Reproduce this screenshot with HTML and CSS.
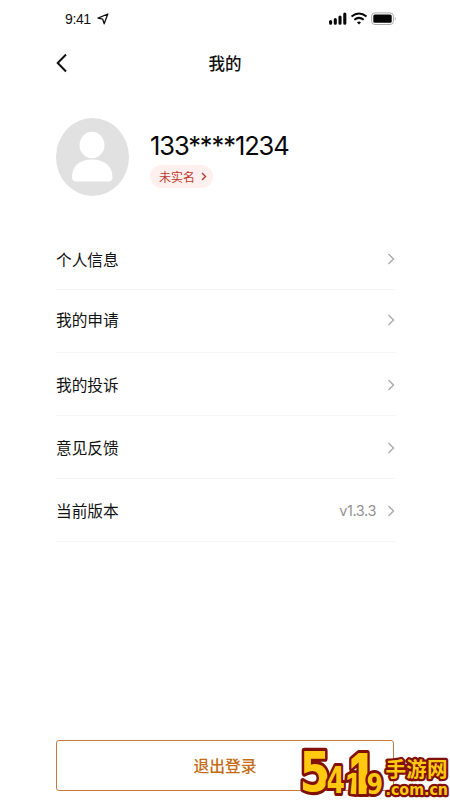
FILE: index.html
```html
<!DOCTYPE html>
<html lang="zh-CN">
<head>
<meta charset="utf-8">
<title>我的</title>
<link rel="stylesheet" href="styles.css">
</head>
<body>
<div class="screen">
  <div class="status">
    <span class="time">9:41</span>
    <svg class="location" viewBox="0 0 12 12"><path d="M1 5.2 10.8 1 7.2 10.8 5.7 6.2Z"/></svg>
    <svg class="signals" viewBox="0 0 68 14">
      <path d="M1.6 9.5v1.8M6.3 7.5v3.8M11 5v6.3M15.8 2v9.3" stroke="#080808" stroke-width="3.1" stroke-linecap="round"/>
      <g fill="none" stroke="#080808" stroke-width="2"><path d="M22.5 4.6Q30 -1.7 37.5 4.6M25.3 7.8Q30 4 34.7 7.8"/><path d="M28 10.4Q30 8.8 32 10.4L30 12.4Z" fill="#080808" stroke="none"/></g>
      <rect x="42.7" y=".9" width="21.7" height="11.6" rx="3.2" fill="none" stroke="#aaa" stroke-width="1"/>
      <rect x="44.3" y="2.6" width="18.4" height="8.2" rx="1.5" fill="#050505"/>
      <path d="M65.8 4.8q2 2 0 4z" fill="#aaa"/>
    </svg>
  </div>
  <header class="nav">
    <svg class="back" viewBox="0 0 12 20"><path d="m10 1.5-8.3 8.5 8.3 8.5"/></svg>
    <h1>我的</h1>
  </header>
  <section class="profile">
    <svg class="avatar" viewBox="0 0 73 78">
      <ellipse cx="36.5" cy="39" rx="36.5" ry="39" fill="#e1e1e1"/>
      <ellipse cx="36" cy="27" rx="12.5" ry="13.2" fill="#fff"/>
      <path d="M16 59.500C16 48 23.500 41.500 36 41.500S56.500 48 56.500 59.500Q56.500 63.500 52 63.500H20.500Q16 63.500 16 59.500Z" fill="#fff"/>
    </svg>
    <div class="identity">
      <div class="phone">133****1234</div>
      <div class="badge">未实名<svg viewBox="0 0 6 9"><path d="m1 1 3.500 3.500L1 8"/></svg></div>
    </div>
  </section>
  <main class="menu">
    <div class="row lowered"><span>个人信息</span><svg class="chevron" viewBox="0 0 8 12"><path d="m1.500 1 5 5-5 5"/></svg></div>
    <div class="row raised"><span>我的申请</span><svg class="chevron" viewBox="0 0 8 12"><path d="m1.500 1 5 5-5 5"/></svg></div>
    <div class="row lowered"><span>我的投诉</span><svg class="chevron" viewBox="0 0 8 12"><path d="m1.500 1 5 5-5 5"/></svg></div>
    <div class="row lowered"><span>意见反馈</span><svg class="chevron" viewBox="0 0 8 12"><path d="m1.500 1 5 5-5 5"/></svg></div>
    <div class="row lowered"><span>当前版本</span><span class="version">v1.3.3</span><svg class="chevron" viewBox="0 0 8 12"><path d="m1.500 1 5 5-5 5"/></svg></div>
  </main>
  <button class="logout">退出登录</button>
  <svg class="watermark" viewBox="0 0 152 56">
    <g class="outlined site">
      <text x="87.500" y="33" font-size="20.500" textLength="62">手游网</text>
      <text class="domain" x="87.500" y="50.500" font-size="16" textLength="62.500" lengthAdjust="spacingAndGlyphs">.com.cn</text>
    </g>
    <g class="outlined digits">
      <text transform="translate(1.500 46.500) scale(.93 1.140)" font-size="48">5</text>
      <text transform="translate(28.500 48.500) scale(.78 1.100)" font-size="34">4</text>
      <text class="one" transform="translate(46.500 49) rotate(6)" font-size="29">1</text>
      <text class="one" transform="translate(51.500 50) scale(.85 1.080)" font-size="52">1</text>
      <text transform="translate(68.500 50) scale(.88 1.080)" font-size="27">9</text>
    </g>
  </svg>
</div>
</body>
</html>
```
FILE: styles.css
```css
* { box-sizing: border-box; }
body { margin: 0; background: #fff; color: #111; font-family: "Liberation Sans", "Noto Sans CJK SC", sans-serif; }
.screen { position: relative; width: 450px; height: 800px; overflow: hidden; display: flex; flex-direction: column; padding: 0 56px 9px; }
svg { display: block; flex: none; }
.status { height: 38px; display: flex; align-items: center; padding-left: 9px; }
.time { font-size: 14px; letter-spacing: -.4px; }
.location { width: 12px; height: 12px; margin-left: 6px; fill: none; stroke: #111; stroke-width: 1.3; stroke-linejoin: round; }
.signals { width: 68px; height: 14px; margin: 0 -3px 0 auto; fill: none; }
.nav { height: 50px; display: grid; grid-template-columns: 12px 1fr 12px; align-items: center; }
.back { width: 12px; height: 20px; fill: none; stroke: #111; stroke-width: 2; }
h1 { margin: 0; padding-top: 2px; text-align: center; font-size: 16.5px; font-weight: 500; line-height: 24px; }
.profile { height: 78px; margin-top: 30px; display: flex; gap: 21px; }
.avatar { width: 73px; height: 78px; }
.phone { margin-top: 12px; height: 32px; font: 25.5px/32px Inter, sans-serif; letter-spacing: -1.1px; white-space: nowrap; color: #080808; }
.badge { width: 63px; height: 23px; margin-top: 3px; padding-left: 9px; display: flex; align-items: center; gap: 6px; border-radius: 12px; background: #fff0f0; color: #bc382c; font-size: 12px; }
.badge svg { width: 6px; height: 9px; fill: none; stroke: #bc382c; stroke-width: 1.4; }
.menu { width: 340px; margin-top: 32px; display: grid; grid-template-rows: 62px 63px 63px 63px 63px; }
.row { display: flex; align-items: center; border-bottom: 1px solid #f5f5f5; font-size: 15.7px; }
.raised { padding-bottom: 3px; }
.lowered { padding-top: 1px; }
.chevron { width: 8px; height: 12px; margin-left: auto; margin-right: 1px; fill: none; stroke: #aaa; stroke-width: 1.4; }
.version { margin-left: auto; color: #929292; font: 14.5px Inter, sans-serif; letter-spacing: -.4px; }
.version + .chevron { margin-left: 11px; }
.logout { width: 338px; height: 51px; margin-top: auto; padding: 0; border: 1px solid #c77a3d; border-radius: 3px; background: #fff; color: #c46d15; font: 500 15.8px "Noto Sans CJK SC", sans-serif; }
.watermark { position: absolute; left: 298px; top: 744px; width: 152px; height: 56px; overflow: visible; }
.outlined { fill: #ffc910; stroke: #801008; stroke-linejoin: round; paint-order: stroke; font-family: "DejaVu Sans", sans-serif; font-weight: 700; }
.digits { stroke-width: 5.5; }
.one { font-family: Inter, sans-serif; font-weight: 900; }
.site { stroke-width: 4.5; font-family: "Noto Sans CJK SC", sans-serif; }
.domain { font-family: "DejaVu Sans", sans-serif; }
```
